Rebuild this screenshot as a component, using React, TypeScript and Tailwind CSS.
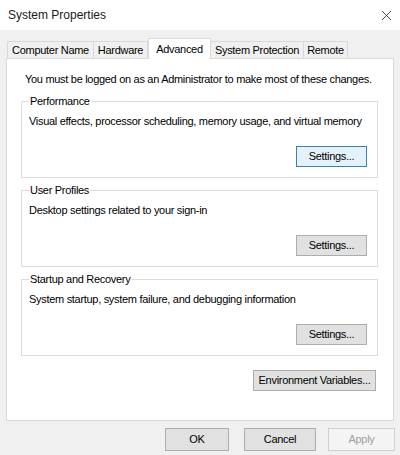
import { X } from 'lucide-react';

const tabs = [
  { label: 'Computer Name', w: 'w-[87px]' },
  { label: 'Hardware', w: 'w-[55px]' },
  { label: 'Advanced', w: 'w-[63px]', active: true },
  { label: 'System Protection', w: 'w-[94px]' },
  { label: 'Remote', w: 'w-[45px]' },
];

const groups = [
  {
    title: 'Performance',
    text: 'Visual effects, processor scheduling, memory usage, and virtual memory',
    primary: true,
  },
  { title: 'User Profiles', text: 'Desktop settings related to your sign-in' },
  { title: 'Startup and Recovery', text: 'System startup, system failure, and debugging information' },
];

function WinButton({
  children,
  className = '',
  primary = false,
  disabled = false,
}: {
  children: React.ReactNode;
  className?: string;
  primary?: boolean;
  disabled?: boolean;
}) {
  const look = disabled
    ? 'border-[#cfcfcf] bg-[#f4f4f4] text-[#a0a0a0]'
    : primary
      ? 'border-[#3c7fb1] bg-[#e5f1fb] text-black'
      : 'border-[#adadad] bg-[#e1e1e1] text-black';
  return (
    <button className={`h-[21px] border flex items-center justify-center whitespace-nowrap ${look} ${className}`}>
      {children}
    </button>
  );
}

export default function App() {
  return (
    <div
      className="w-[400px] h-[455px] bg-[#f0f0f0] flex flex-col text-[11px] tracking-[-0.3px] text-black overflow-hidden"
      style={{ fontFamily: '"Liberation Sans", Arial, sans-serif' }}
    >
      <div className="h-[30px] bg-white flex items-center justify-between pl-[8px] pr-[5px]">
        <span className="text-[12px] tracking-normal text-[#1a1a1a]">System Properties</span>
        <X className="w-[17px] h-[17px] text-[#222]" strokeWidth={1.1} />
      </div>

      <div className="flex items-end pl-[7px] pt-[7px] h-[28px]">
        {tabs.map((t) => (
          <div
            key={t.label}
            className={`${t.w} flex items-center justify-center border border-b-0 whitespace-nowrap ${
              t.active
                ? 'h-[21px] bg-white border-[#d9d9d9] -mb-px relative z-10'
                : 'h-[17px] bg-[#f0f0f0] border-[#d9d9d9] -ml-px first:ml-0'
            }`}
          >
            {t.label}
          </div>
        ))}
      </div>

      <div className="mx-[6px] w-[388px] h-[363px] bg-white border border-[#d9d9d9] flex flex-col pl-[14px] pr-[15px]">
        <p className="mt-[13px] pl-[4px] leading-[14px] whitespace-nowrap">
          You must be logged on as an Administrator to make most of these changes.
        </p>

        <div className="mt-[9px] flex flex-col gap-[6px]">
          {groups.map((g) => (
            <fieldset key={g.title} className="border border-[#dcdcdc] px-[7px]">
              <legend className="px-[1px] leading-[13px]">{g.title}</legend>
              <div className="h-[69px] flex flex-col">
                <p className="leading-[14px] mt-[6px] whitespace-nowrap">{g.text}</p>
                <div className="flex justify-end mt-auto mb-[10px] pr-[3px]">
                  <WinButton primary={g.primary} className="w-[71px]">
                    Settings...
                  </WinButton>
                </div>
              </div>
            </fieldset>
          ))}
        </div>

        <div className="flex justify-end mt-[14px] pr-[2px]">
          <WinButton className="w-[123px]">Environment Variables...</WinButton>
        </div>
      </div>

      <div className="flex justify-end pt-[7px] pr-[5px] gap-[15px]">
        <WinButton className="w-[64px] h-[23px]">OK</WinButton>
        <WinButton className="w-[72px] h-[23px] -mr-[3px]">Cancel</WinButton>
        <WinButton disabled className="w-[67px] h-[23px]">
          Apply
        </WinButton>
      </div>
    </div>
  );
}
